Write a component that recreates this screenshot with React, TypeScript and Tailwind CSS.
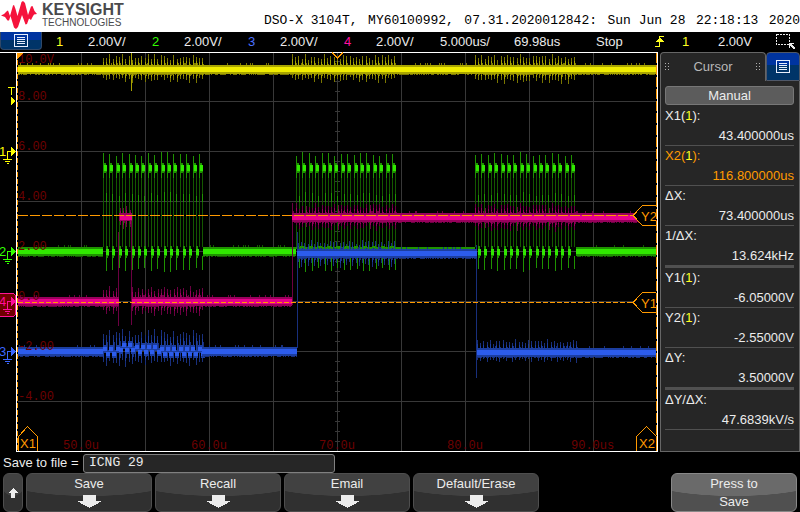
import type { ReactNode } from "react";

const YELLOW = { hi: "#f0ec00", mid: "#a8a400", low: "#7a7600" };
const GREEN = { hi: "#30e800", mid: "#1e9200", low: "#145800" };
const PINK = { hi: "#e8008c", mid: "#98005c", low: "#6c0042" };
const BLUE = { hi: "#2c5cec", mid: "#1c3ea0", low: "#182f7c" };
const ORANGE = "#ff9a00";
type Tone = typeof YELLOW;

// Repeatable noise, so that a stopped acquisition always redraws the same.
const noise = (n: number) => {
  const v = Math.sin(n * 12.9898) * 43758.5453;
  return v - Math.floor(v);
};

// One-pixel-wide columns gathered into a single path.
const columns = (list: number[][]) =>
  list.map(([x, top, bottom, w = 1]) => `M${x} ${top}h${w}V${bottom}h${-w}z`).join("");

function Band({ from, to, y, tone }: { from: number; to: number; y: number; tone: Tone }) {
  const fuzz: number[][] = [];
  for (let x = from; x < to; x++) {
    const n = noise(x + y);
    if (n > 0.9) fuzz.push([x, y - 6, y + 4]);
    else if (n > 0.35) fuzz.push([x, y - 4, y + 6]);
  }
  return (
    <g>
      <path d={columns(fuzz)} fill={tone.low} />
      <rect x={from} y={y - 4} width={to - from} height={9} fill={tone.mid} />
      <rect x={from} y={y - 2} width={to - from} height={5} fill={tone.hi} />
    </g>
  );
}

function Ripple({ from, to, y, up, down, tone }: { from: number; to: number; y: number; up: number; down: number; tone: Tone }) {
  const outer: number[][] = [];
  const inner: number[][] = [];
  for (let i = 0, x = from; x < to; i++, x = from + Math.round(i * 3.2)) {
    const a = 0.7 + 0.3 * noise(i + from);
    const b = 0.7 + 0.3 * noise(i * 3 + y);
    const top = Math.round(y - up * (i % 2 ? a * 0.85 : a));
    const bottom = Math.round(y + down * (i % 2 ? b : b * 0.8));
    outer.push([x, top, bottom]);
    inner.push([x, Math.round((top * 2 + y) / 3), Math.round((bottom * 2 + y) / 3)]);
    if (i % 2) outer.push([x + 1, Math.round((top + y) / 2), Math.round((bottom + y) / 2)]);
  }
  return (
    <g>
      <path d={columns(outer)} fill={tone.low} />
      <path d={columns(inner)} fill={tone.mid} />
    </g>
  );
}

// Square-wave clock burst: high level at y 168, low level at y 252.
function Clock({ start, low }: { start: number; low: boolean }) {
  const faint: number[][] = [];
  const mid: number[][] = [];
  const hi: number[][] = [];
  for (let i = 0; i < 16; i++) {
    const x = start + Math.round(i * 6.4);
    const n = Math.round(noise(i + start) * 4);
    faint.push([x, 172, 247], [x + 3, 172, 247]);
    mid.push([x, 152 + n, 178], [x + 3, 192 + n, 202]);
    mid.push([x + 1, 163, 173, 2], [x + 3, 165, 172]);
    hi.push([x + 1, 165, 171, 3]);
    mid.push([x + 3, 256, 272 - n]);
    if (low && i < 15) {
      mid.push([x + 3, 246, 258, 2], [x + 5, 249, 256]);
      hi.push([x + 3, 249, 255, 3]);
    }
  }
  return (
    <g>
      <path d={columns(faint)} fill={GREEN.low} />
      <path d={columns(mid)} fill={GREEN.mid} />
      <path d={columns(hi)} fill={GREEN.hi} />
    </g>
  );
}

function BlueBurst() {
  const mid: number[][] = [];
  const hi: number[][] = [];
  for (let i = 0; i < 32; i++) {
    const x = 103 + Math.round(i * 3.15);
    const bump = i > 4 && i < 10 ? 4 : i > 9 && i < 18 ? 2 : 0;
    const y = (i % 2 ? 350 : 345) - bump;
    mid.push([x, y, y + 8, 4]);
    hi.push([x, y + 2, y + 6, 4]);
  }
  return (
    <g>
      <Ripple from={103} to={203} y={349} up={20} down={18} tone={BLUE} />
      <path d={columns(mid)} fill={BLUE.mid} />
      <path d={columns(hi)} fill={BLUE.hi} />
    </g>
  );
}

function GroundMark({ y, label, color }: { y: number; label: string; color: string }) {
  return (
    <g stroke={color} fill="none">
      <path d={`M7.5 ${y + 8}V${y + 0.5}H12M3 ${y + 8.5}h9M5 ${y + 10.5}h5M7 ${y + 12.5}h2`} />
      <path d={`M11 ${y - 4}l5 4.5-5 4.5z`} fill={color} stroke="none" />
      <text x="-1" y={y + 5} fill={color} stroke="none" className="font-['Liberation_Sans'] text-[13px]">{label}</text>
    </g>
  );
}

function Scope() {
  const vertical = [81, 145, 209, 273, 337, 401, 465, 529, 593];
  const horizontal = [101, 151, 201, 251, 301, 351, 401];
  const ticks = Array.from({ length: 39 }, (_, i) => 61 + i * 10);
  const levels: [string, number][] = [["10.0V", 63], ["8.00", 100], ["6.00", 150], ["4.00", 200], ["2.00", 250], ["0.0", 300], ["-2.00", 350], ["-4.00", 400]];
  const times: [string, number][] = [["50.0u", 63], ["60.0u", 191], ["70.0u", 319], ["80.0u", 447], ["90.0us", 571]];
  const speckles = Array.from({ length: 60 }, (_, i) => [392 + Math.floor(noise(i) * 82), 249, 251]);
  return (
    <svg viewBox="0 52 658 400" className="block w-full" shapeRendering="crispEdges" role="img" aria-label="Oscilloscope traces">
      <path stroke="#383838" d={vertical.map((x) => `M${x}.5 53V451`).join("") + horizontal.map((y) => `M18 ${y}.5H656`).join("") + ticks.map((y) => `M335 ${y}.5h5`).join("")} />

      <Ripple from={103} to={204} y={69} up={15} down={14} tone={YELLOW} />
      <Ripple from={292} to={397} y={69} up={15} down={14} tone={YELLOW} />
      <Ripple from={475} to={577} y={69} up={15} down={15} tone={YELLOW} />
      <path d={columns([[131, 53, 91]])} fill={YELLOW.mid} />
      <Band from={18} to={656} y={69} tone={YELLOW} />

      <Clock start={103} low />
      <Clock start={296} low={false} />
      <Clock start={475} low />
      <Band from={18} to={103} y={251} tone={GREEN} />
      <Band from={203} to={296} y={251} tone={GREEN} />
      <Band from={576} to={656} y={251} tone={GREEN} />
      <path d="M296 247h179v2H296z" fill={GREEN.mid} />
      <path d={columns(speckles)} fill={GREEN.hi} />

      <path d={columns([[118, 232, 326], [131, 222, 325], [292, 203, 305]])} fill={PINK.low} />
      <Ripple from={103} to={119} y={301} up={15} down={15} tone={PINK} />
      <Ripple from={132} to={204} y={301} up={15} down={16} tone={PINK} />
      <Band from={18} to={119} y={301} tone={PINK} />
      <Band from={132} to={292} y={301} tone={PINK} />
      <Ripple from={120} to={132} y={217} up={11} down={14} tone={PINK} />
      <path d="M119 213h13v8h-13z" fill={PINK.mid} />
      <path d="M120 215h12v5h-12z" fill={PINK.hi} />
      <Ripple from={296} to={397} y={217} up={14} down={14} tone={PINK} />
      <Ripple from={475} to={577} y={217} up={14} down={15} tone={PINK} />
      <Band from={292} to={640} y={217} tone={PINK} />

      <BlueBurst />
      <Band from={18} to={103} y={351} tone={BLUE} />
      <Band from={202} to={297} y={351} tone={BLUE} />
      <path d={columns([[297, 232, 348], [476, 245, 378]])} fill={BLUE.low} />
      <Ripple from={298} to={397} y={253} up={13} down={15} tone={BLUE} />
      <Band from={297} to={477} y={253} tone={BLUE} />
      <Ripple from={477} to={577} y={352} up={13} down={11} tone={BLUE} />
      <Band from={477} to={656} y={352} tone={BLUE} />
      <path d="M300 247h96" stroke={GREEN.mid} strokeDasharray="4 5" strokeWidth="2" />

      <g fill="#6e0000" className="font-['Liberation_Mono',monospace] text-[12px]">
        {levels.map(([t, y]) => <text key={t} x="18" y={y}>{t}</text>)}
        {times.map(([t, x]) => <text key={t} x={x} y="449">{t}</text>)}
      </g>

      <g stroke={ORANGE} fill="none">
        <path d="M18 215.5H634" strokeDasharray="10 2" />
        <path d="M18 302.5H634" strokeDasharray="5 2" />
        <path d="M17.5 53V451" strokeDasharray="5 2" />
        <path d="M656.5 53V451" strokeDasharray="10 2" />
      </g>
      <path d="M0 52.5H657.5V451.5H16.5V52" fill="none" stroke="#fff" />
      <path d="M17 53h6l-6 6z" fill={ORANGE} />
      <path d="M332 53l5.5 5 5.5-5" fill="none" stroke={ORANGE} strokeWidth="1.5" />

      <g fill="#000" stroke={ORANGE}>
        <path d="M656 205.5H642.5L633 215.5 642.5 225.5H656M656 292.5H642.5L633 302.5 642.5 312.5H656" />
        <path d="M18.5 451V436.5L27.5 426.5 37.5 436.5V451M636.5 451V436.5L646.5 426.5 656.5 436.5V451" />
      </g>
      <g fill={ORANGE} className="font-['Liberation_Sans'] text-[13px]">
        <text x="641" y="221">Y2</text>
        <text x="641" y="308">Y1</text>
        <text x="20" y="448">X1</text>
        <text x="639" y="448">X2</text>
      </g>

      <path d="M8 87.5h7M11.5 87v8" stroke="#ff0" />
      <path d="M11 96.5l5 4.5-5 4.5z" fill="#ff0" />
      <path d="M0 293.5H13.5L15.5 295.5V314.5L13.5 316.5H0" fill="#6e0000" stroke="#ff1493" />
      <GroundMark y={151} label="1" color="#ffff00" />
      <GroundMark y={251} label="2" color="#33ff00" />
      <GroundMark y={301} label="4" color="#ff0c9c" />
      <GroundMark y={351} label="3" color="#3a66ff" />
    </svg>
  );
}

function MenuGlyph() {
  return (
    <svg width="14" height="13" viewBox="0 0 14 13" fill="none" stroke="#e8eefc" shapeRendering="crispEdges" aria-hidden="true">
      <path d="M.5.5h13v12H.5zM3 3.5h8M3 5.5h8M3 7.5h8M3 9.5h8" />
    </svg>
  );
}

function Logo() {
  return (
    <div className="flex items-start gap-1 pl-px">
      <svg width="37" height="30" viewBox="0 0 37 30" aria-hidden="true" fill="#f5133c">
        <path d="M0 15.5L3 14 6 11 7 10.5 9 16 12 5.5 13 5 14.5 9 16.5 16 20.5 2 22 1 24 3 27 15 30 6.5 31.5 6 33.5 11 36 14 33 14.5 31.5 17 30 20 28 18.5 26 24 24.5 24.5 22.5 19 21 15 17 27 15 29 13 27.5 9.5 16 8 20.5 6.5 20.5 4 17z" />
      </svg>
      <div className="flex flex-col font-['Liberation_Sans',sans-serif] text-[#4a4a4d]">
        <span className="h-4 text-[16px] font-bold leading-[20px]">KEYSIGHT</span>
        <span className="h-4 text-[10px] leading-[14px]">TECHNOLOGIES</span>
      </div>
    </div>
  );
}

function Channel({ id, color }: { id: string; color: string }) {
  return (
    <div className="flex w-24">
      <span className={`w-8 ${color}`}>{id}</span>
      <span>2.00V/</span>
    </div>
  );
}

function Reading({ label, source, value, thick, active }: { label: string; source?: string; value: string; thick?: boolean; active?: boolean }) {
  return (
    <div className={`${thick ? "border-b-3" : "border-b"} border-[#505050] ${active ? "text-[#ff9a00]" : ""}`}>
      <dt className="h-5 leading-5">
        {label}
        {source && <>(<span className="text-[#ffff20]">{source}</span>)</>}:
      </dt>
      <dd className="h-[19px] text-right leading-5">{value}</dd>
    </div>
  );
}

const softkey = "h-[39px] rounded-md border bg-[radial-gradient(80%_60%_at_50%_0,#414141_98%,#303030_100%)] border-[#4e4e4e]";

function Softkey({ children }: { children: ReactNode }) {
  return (
    <button type="button" className={`${softkey} flex w-[126px] flex-col items-center`}>
      <span className="h-[21px] leading-5">{children}</span>
      <svg width="25" height="13" viewBox="0 0 25 13" fill="#ececec" shapeRendering="crispEdges" aria-hidden="true">
        <path d="M6 0h13v6h6L12.5 13 0 6h6z" />
      </svg>
    </button>
  );
}

function Grip() {
  return (
    <svg width="5" height="8" viewBox="0 0 5 8" fill="#b0b0b0" shapeRendering="crispEdges" aria-hidden="true">
      <path d="M0 0h1v1H0zM3 0h1v1H3zM0 3h1v1H0zM3 3h1v1H3zM0 6h1v1H0zM3 6h1v1H3z" />
    </svg>
  );
}

export default function App() {
  return (
    <div className="min-h-screen bg-black font-['Liberation_Sans',sans-serif] text-[13px] text-[#ececec]">
      <header className="flex h-8 justify-between bg-white">
        <Logo />
        <h1 className="mt-[11px] flex w-[536px] justify-between whitespace-nowrap font-['Liberation_Mono',monospace] text-[13px] leading-5 text-black">
          <span>DSO-X 3104T, </span>
          <span>MY60100992, </span>
          <span>07.31.2020012842: </span>
          <span>Sun Jun 28 </span>
          <span>22:18:13 </span>
          <span>2020</span>
        </h1>
      </header>

      <div className="flex h-5 leading-5">
        <button type="button" aria-label="Main menu" className="mr-3.5 flex h-[18px] w-[42px] items-center justify-center rounded-b border border-t-0 border-[#304868] bg-linear-to-b from-[#0034a0] from-50% to-[#003468] to-50%">
          <MenuGlyph />
        </button>
        <Channel id="1" color="text-[#ffff20]" />
        <Channel id="2" color="text-[#33ff00]" />
        <Channel id="3" color="text-[#4a70ff]" />
        <Channel id="4" color="text-[#ff10a0]" />
        <span className="w-[74px]">5.000us/</span>
        <span className="w-[82px]">69.98us</span>
        <span>Stop</span>
        <div className="ml-auto flex">
          <svg width="27" height="20" viewBox="0 0 27 20" fill="none" stroke="#ffff20" shapeRendering="crispEdges" aria-label="Rising edge trigger">
            <path d="M0 14.5h4.5V4.5H9" />
            <path d="M1 10h8L5 6H4z" fill="#ffff20" stroke="none" />
          </svg>
          <span className="w-9 text-[#ffff20]">1</span>
          <span className="w-[58px]">2.00V</span>
          <svg width="24" height="20" viewBox="0 0 24 20" fill="none" stroke="#ececec" shapeRendering="crispEdges" aria-label="Zoom box">
            <path d="M.5 2.5h13v10H.5z" strokeDasharray="2 1" />
            <path d="M13 11.5h5M13.5 11v5M14 12l5 5" strokeWidth="1.5" />
          </svg>
        </div>
      </div>

      <main className="flex items-stretch">
        <div className="min-w-0 flex-1"><Scope /></div>
        <aside className="ml-0.5 flex w-[140px] flex-col">
          <div className="flex h-[29px]">
            <div className="flex w-[106px] items-center justify-between rounded-t border border-b-0 border-[#666] bg-[#262626] px-1">
              <Grip />
              <h2 className="text-[#b8b8b8]">Cursor</h2>
              <Grip />
            </div>
            <button type="button" aria-label="Cursor menu" className="flex flex-1 items-center justify-center rounded-t border border-[#505868] bg-linear-to-b from-[#0034a0] from-45% to-[#003468] to-45%">
              <MenuGlyph />
            </button>
          </div>
          <div className="flex-1 border border-t-0 border-[#666] bg-[#262626] pl-1 pr-[5px] pt-[5px]">
            <button type="button" className="mb-px block h-[19px] w-full rounded-[3px] border border-[#777] bg-[#5c5c5c] leading-[17px]">Manual</button>
            <dl>
              <Reading label="X1" source="1" value="43.400000us" />
              <Reading label="X2" source="1" value="116.800000us" active />
              <Reading label="ΔX" value="73.400000us" />
              <Reading label="1/ΔX" value="13.624kHz" thick />
              <Reading label="Y1" source="1" value="-6.05000V" />
              <Reading label="Y2" source="1" value="-2.55000V" />
              <Reading label="ΔY" value="3.50000V" thick />
              <Reading label="ΔY/ΔX" value="47.6839kV/s" />
            </dl>
          </div>
        </aside>
      </main>

      <div className="flex h-[21px] items-center pl-[3px] pt-px">
        <label htmlFor="file" className="w-20 whitespace-nowrap">Save to file =</label>
        <input id="file" defaultValue="ICNG 29" className="h-[19px] w-[252px] rounded-[3px] border border-[#808080] bg-[#262626] px-[5px] font-['Liberation_Mono',monospace] text-[13px]" />
      </div>

      <nav className="flex gap-[3px] px-[3px]">
        <button type="button" aria-label="Back" className={`${softkey} flex w-5 items-center justify-center`}>
          <svg width="10" height="10" viewBox="0 0 10 10" fill="#ececec" shapeRendering="crispEdges" aria-hidden="true">
            <path d="M5 0l5 5H7v5H3V5H0z" />
          </svg>
        </button>
        <Softkey>Save</Softkey>
        <Softkey>Recall</Softkey>
        <Softkey>Email</Softkey>
        <Softkey>Default/Erase</Softkey>
        <button type="button" className="ml-auto h-[39px] w-[126px] rounded-md border border-[#888] bg-[radial-gradient(80%_60%_at_50%_0,#6a6a6a_98%,#505050_100%)] leading-[18px]">
          Press to<br />Save
        </button>
      </nav>
    </div>
  );
}
